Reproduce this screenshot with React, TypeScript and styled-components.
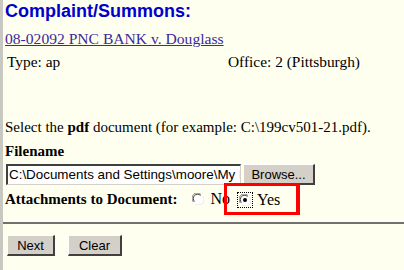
import React from 'react';
import styled, { createGlobalStyle } from 'styled-components';

const Global = createGlobalStyle`
  html, body {
    margin: 0;
    padding: 0;
    background: #fffff0;
  }
  body {
    font-family: "Liberation Serif", "Times New Roman", serif;
    font-size: 15px;
    color: #000;
  }
`;

const Page = styled.div`
  width: 404px;
  height: 270px;
  box-sizing: border-box;
  border-left: 3px solid #c8c8c0;
  background: #fffff0;
  overflow: hidden;
`;

const Content = styled.div`
  padding: 0 0 0 2px;
`;

const Title = styled.h1`
  margin: 0;
  padding-top: 1px;
  font-family: "Liberation Sans", Arial, sans-serif;
  font-weight: bold;
  font-size: 18px;
  line-height: 21px;
  color: #0000cc;
`;

const CaseLink = styled.a`
  display: inline-block;
  margin-top: 8px;
  font-size: 15.6px;
  line-height: 18px;
  color: #3c2a9a;
  text-decoration: underline;
`;

const InfoRow = styled.div`
  display: grid;
  grid-template-columns: 221px 1fr;
  margin-top: 5px;
  padding-left: 2px;
  line-height: 18px;
  font-size: 15.4px;
`;

const Prompt = styled.div`
  margin-top: 47px;
  line-height: 18px;
`;

const Label = styled.div`
  margin-top: 6px;
  line-height: 18px;
  font-weight: bold;
`;

const FileRow = styled.div`
  display: flex;
  align-items: center;
  gap: 2px;
  margin-top: 4px;
  padding-left: 1px;
`;

const FileInput = styled.div`
  width: 235px;
  height: 21px;
  box-sizing: border-box;
  border-style: solid;
  border-width: 2px 1px 1px 2px;
  border-color: #404040 #d4d0c8 #d4d0c8 #404040;
  background: #fff;
  font-family: "Liberation Sans", Arial, sans-serif;
  font-size: 13.4px;
  line-height: 17px;
  padding-left: 1px;
  white-space: nowrap;
  overflow: hidden;
`;

const WinButton = styled.button<{ w: number }>`
  width: ${({ w }) => w}px;
  height: 21px;
  box-sizing: border-box;
  padding: 0;
  background: #d4d0c8;
  border-style: solid;
  border-width: 1px 2px 2px 1px;
  border-color: #ffffff #404040 #404040 #ffffff;
  font-family: "Liberation Sans", Arial, sans-serif;
  font-size: 13px;
  color: #000;
`;

const AttachRow = styled.div`
  display: flex;
  align-items: center;
  height: 32px;
  margin-top: -2px;
`;

const AttachLabel = styled.span`
  font-weight: bold;
  margin-right: 15px;
`;

const Option = styled.label`
  display: flex;
  align-items: center;
  gap: 6px;
  font-size: 16px;
`;

const Highlight = styled.div`
  display: flex;
  align-items: center;
  flex-shrink: 0;
  margin-left: -6px;
  width: 76px;
  height: 32px;
  box-sizing: border-box;
  border: 3px solid #ff0000;
  border-right-width: 4px;
  padding: 2px 0 0 12px;
`;

const Radio = ({ checked }: { checked?: boolean }) => (
  <svg width="12" height="12" viewBox="0 0 12 12">
    <circle cx="6" cy="6" r="5.5" fill="#fff" />
    <path d="M1.5 9 A5 5 0 0 1 9 1.5" fill="none" stroke="#808080" strokeWidth="1" />
    <path d="M2.5 8.5 A4 4 0 0 1 8.5 2.5" fill="none" stroke="#404040" strokeWidth="1" />
    <path d="M10.5 3 A5 5 0 0 1 3 10.5" fill="none" stroke="#e8e8e8" strokeWidth="1" />
    {checked && <circle cx="6" cy="6" r="2" fill="#000" />}
  </svg>
);

const FocusBox = styled.span`
  display: inline-flex;
  outline: 1px dotted #000;
  outline-offset: 1px;
`;

const Rule = styled.hr`
  margin: 7px 0 0 0;
  border: none;
  border-top: 2px solid #707070;
`;

const ButtonBar = styled.div`
  display: flex;
  gap: 13px;
  padding: 11px 0 0 4px;
`;

export default function App() {
  return (
    <Page>
      <Global />
      <Content>
        <Title>Complaint/Summons:</Title>
        <CaseLink href="#">08-02092 PNC BANK v. Douglass</CaseLink>
        <InfoRow>
          <span>Type: ap</span>
          <span>Office: 2 (Pittsburgh)</span>
        </InfoRow>
        <Prompt>
          Select the <b>pdf</b> document (for example: C:\199cv501-21.pdf).
        </Prompt>
        <Label>Filename</Label>
        <FileRow>
          <FileInput>C:\Documents and Settings\moore\My D</FileInput>
          <WinButton w={72}>Browse...</WinButton>
        </FileRow>
        <AttachRow>
          <AttachLabel>Attachments to Document:</AttachLabel>
          <Option>
            <Radio />
            <span>No</span>
          </Option>
          <Highlight>
            <Option>
              <FocusBox>
                <Radio checked />
              </FocusBox>
              <span>Yes</span>
            </Option>
          </Highlight>
        </AttachRow>
      </Content>
      <Rule />
      <ButtonBar>
        <WinButton w={48}>Next</WinButton>
        <WinButton w={54}>Clear</WinButton>
      </ButtonBar>
    </Page>
  );
}
